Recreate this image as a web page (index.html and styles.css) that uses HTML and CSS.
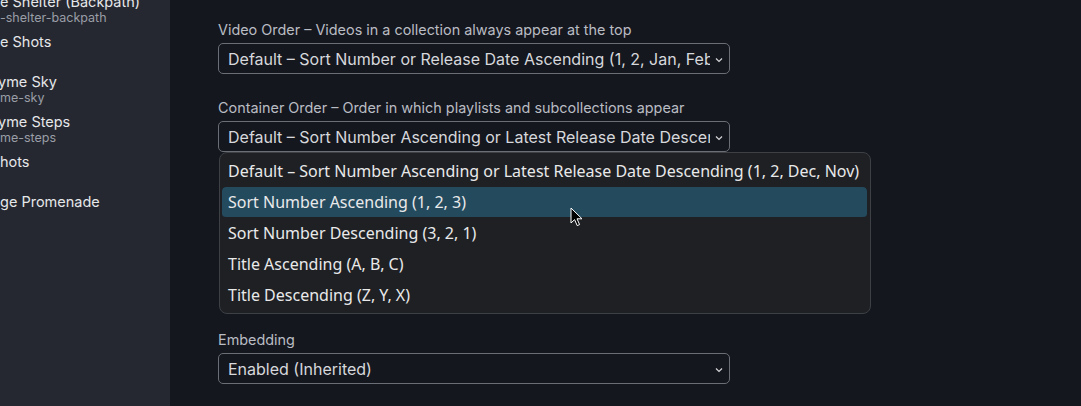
FILE: index.html
```html
<!DOCTYPE html>
<html>
<head>
<meta charset="utf-8">
<link rel="stylesheet" href="styles.css">
</head>
<body>
<div class="app">
  <aside class="sidebar">
    <div class="item first"><div class="title">e Shelter (Backpath)</div><div class="sub">-shelter-backpath</div></div>
    <div class="item"><div class="title">e Shots</div></div>
    <div class="item"><div class="title cut">yme Sky</div><div class="sub">me-sky</div></div>
    <div class="item"><div class="title cut">yme Steps</div><div class="sub">me-steps</div></div>
    <div class="item"><div class="title">hots</div></div>
    <div class="item"><div class="title">ge Promenade</div></div>
  </aside>
  <main class="main">
    <div class="field">
      <div class="label">Video Order – Videos in a collection always appear at the top</div>
      <div class="select"><span class="value">Default – Sort Number or Release Date Ascending (1, 2, Jan, Feb)</span><svg class="chev" width="8" height="6" viewBox="0 0 8 6"><path d="M1 1.5 L4 4.5 L7 1.5" fill="none" stroke="#d4d6da" stroke-width="1.2"/></svg></div>
    </div>
    <div class="field dd-host">
      <div class="label">Container Order – Order in which playlists and subcollections appear</div>
      <div class="select"><span class="value">Default – Sort Number Ascending or Latest Release Date Descending (1, 2, Dec, Nov)</span><svg class="chev" width="8" height="6" viewBox="0 0 8 6"><path d="M1 1.5 L4 4.5 L7 1.5" fill="none" stroke="#d4d6da" stroke-width="1.2"/></svg></div>
      <ul class="popup">
        <li>Default – Sort Number Ascending or Latest Release Date Descending (1, 2, Dec, Nov)</li>
        <li class="active">Sort Number Ascending (1, 2, 3)</li>
        <li>Sort Number Descending (3, 2, 1)</li>
        <li>Title Ascending (A, B, C)</li>
        <li>Title Descending (Z, Y, X)</li>
      </ul>
      <svg class="cursor" width="14" height="21" viewBox="0 0 14 21"><path d="M1 1 L1 16 L4.6 12.6 L7.2 18.6 L9.6 17.6 L7 11.8 L12 11.8 Z" fill="#000" stroke="#fff" stroke-width="1" stroke-linejoin="round"/></svg>
    </div>
    <div class="field">
      <div class="label">Embedding</div>
      <div class="select"><span class="value">Enabled (Inherited)</span><svg class="chev" width="8" height="6" viewBox="0 0 8 6"><path d="M1 1.5 L4 4.5 L7 1.5" fill="none" stroke="#d4d6da" stroke-width="1.2"/></svg></div>
    </div>
  </main>
</div>
</body>
</html>
```

FILE: styles.css
```css
* { box-sizing: border-box; }
html, body {
  margin: 0;
  padding: 0;
  width: 1081px;
  height: 406px;
  overflow: hidden;
  background: #15171e;
  font-family: Inter, "Noto Sans", sans-serif;
}
.app {
  display: flex;
  height: 406px;
}
.sidebar {
  width: 170px;
  flex: none;
  background: #252830;
  overflow: hidden;
}
.item {
  height: 40px;
  padding-top: 3px;
  white-space: nowrap;
}
.item.first {
  margin-top: -10px;
}
.title {
  font-size: 14.5px;
  line-height: 18px;
  color: #e6e7ea;
}
.title.cut {
  margin-left: -2px;
}
.sub {
  font-size: 12.5px;
  line-height: 14px;
  color: #9a9ea7;
}
.main {
  flex: 1;
  padding: 20px 0 0 48px;
}
.field {
  width: 512px;
  margin-bottom: 24px;
}
.dd-host {
  position: relative;
  margin-bottom: 178px;
}
.label {
  font-size: 14.4px;
  line-height: 20px;
  color: #b9bcc3;
  margin-bottom: 3px;
  white-space: nowrap;
}
.select {
  position: relative;
  height: 31px;
  border: 1px solid #6a6e77;
  border-radius: 5px;
  padding: 0 19px 0 9px;
  display: flex;
  align-items: center;
  overflow: hidden;
}
.value {
  font-size: 16px;
  color: #d6d8dc;
  white-space: nowrap;
  overflow: hidden;
  flex: 1;
}
.chev {
  position: absolute;
  right: 6px;
  top: 13px;
}
.popup {
  position: absolute;
  left: 1px;
  top: 54px;
  width: 652px;
  margin: 0;
  padding: 3px 3px 2px 2px;
  list-style: none;
  background: #1e2024;
  border: 1px solid #3d4045;
  border-radius: 8px;
  font-family: "Noto Sans", sans-serif;
  font-size: 16px;
  color: #e9e9ea;
  z-index: 5;
}
.popup li {
  height: 31px;
  line-height: 31px;
  padding-left: 6px;
  border-radius: 4px;
  white-space: nowrap;
}
.popup li.active {
  background: #244a5e;
  background-clip: padding-box;
  border-bottom: 1px solid transparent;
  line-height: 30px;
}
.cursor {
  position: absolute;
  left: 352px;
  top: 109px;
  z-index: 6;
}
```
